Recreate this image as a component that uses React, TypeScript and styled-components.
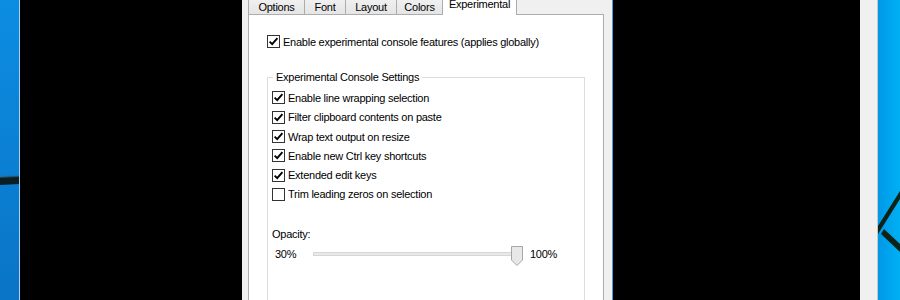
import React from "react";
import styled, { createGlobalStyle } from "styled-components";

const Global = createGlobalStyle`
  html, body { margin: 0; padding: 0; background: #000; }
  body { font-family: "Liberation Sans", Arial, sans-serif; }
  #root { width: 900px; height: 300px; overflow: hidden; }
`;

const Screen = styled.div`
  display: flex;
  width: 900px;
  height: 300px;
  overflow: hidden;
  font-family: "Liberation Sans", Arial, sans-serif;
  font-size: 11px;
  letter-spacing: -0.25px;
  color: #000;
`;

const DesktopStrip = styled.div<{ $w: number; $bg: string; $edge?: string; $edgeSide?: "left" | "right" }>`
  flex: none;
  width: ${(p) => p.$w}px;
  height: 100%;
  box-sizing: border-box;
  background: ${(p) => p.$bg};
  ${(p) => (p.$edge ? `border-${p.$edgeSide}: 1px solid ${p.$edge};` : "")}
  overflow: hidden;
  svg { display: block; }
`;

const ConsoleBack = styled.div<{ $w: number; $edge?: string }>`
  flex: none;
  width: ${(p) => p.$w}px;
  height: 100%;
  box-sizing: border-box;
  background: #000;
  ${(p) => (p.$edge ? `border-left: 1px solid ${p.$edge};` : "")}
`;

const GreyGap = styled.div<{ $w: number }>`
  flex: none;
  width: ${(p) => p.$w}px;
  height: 100%;
  box-sizing: border-box;
  background: #f0f0f0;
  border-right: 1px solid #c8c8c8;
`;

const Dialog = styled.div`
  flex: none;
  width: 370px;
  height: 100%;
  box-sizing: border-box;
  background: #f0f0f0;
  padding: 0 8px 0 6px;
  display: flex;
  flex-direction: column;
`;

const TabStrip = styled.div`
  display: flex;
  align-items: flex-end;
  height: 14px;
  flex: none;
`;

const Tab = styled.div<{ $w: number; $active?: boolean }>`
  flex: none;
  box-sizing: border-box;
  width: ${(p) => p.$w}px;
  margin-left: -1px;
  &:first-child { margin-left: 0; }
  border-left: 1px solid #acacac;
  border-right: 1px solid #acacac;
  text-align: center;
  white-space: nowrap;
  height: ${(p) => (p.$active ? 16 : 14)}px;
  line-height: ${(p) => (p.$active ? 11 : 13)}px;
  background: ${(p) => (p.$active ? "#ffffff" : "linear-gradient(#f0f0f0, #e5e5e5)")};
  position: relative;
  z-index: ${(p) => (p.$active ? 1 : 0)};
  margin-bottom: ${(p) => (p.$active ? -1 : 0)}px;
  padding-top: ${(p) => (p.$active ? 0 : 1)}px;
`;

const Panel = styled.div`
  flex: 1;
  box-sizing: border-box;
  width: 356px;
  background: #fff;
  border: 1px solid #adadad;
  padding: 17px 0 0 18px;
`;

const CheckRow = styled.label`
  display: flex;
  align-items: center;
  gap: 3px;
  height: 19.3px;
  white-space: nowrap;
`;

const Box = styled.span`
  flex: none;
  width: 13px;
  height: 13px;
  box-sizing: border-box;
  border: 1px solid #333333;
  background: #fff;
  display: flex;
  align-items: center;
  justify-content: center;
  svg { display: block; }
`;

const Group = styled.fieldset`
  margin: 19px 0 0 0;
  width: 318px;
  box-sizing: border-box;
  border: 1px solid #dcdcdc;
  border-bottom: none;
  padding: 4px 0 0 4px;
  min-height: 240px;
`;

const Legend = styled.legend`
  padding: 0 3px;
  margin-left: 1px;
  line-height: 14px;
  white-space: nowrap;
`;

const FieldLabel = styled.div`
  margin-top: 23px;
  line-height: 14px;
`;

const SliderRow = styled.div`
  display: flex;
  align-items: center;
  height: 20px;
  margin-top: 3px;
`;

const RangeLabel = styled.span<{ $w?: number; $ml?: number }>`
  flex: none;
  ${(p) => (p.$w ? `width: ${p.$w}px;` : "")}
  margin-left: ${(p) => p.$ml ?? 0}px;
`;

const Slider = styled.div`
  flex: none;
  position: relative;
  width: 210px;
  height: 20px;
`;

const Track = styled.div`
  margin-top: 8px;
  width: 202px;
  height: 4px;
  box-sizing: border-box;
  background: #e7eaea;
  border: 1px solid #d6d6d6;
`;

const Thumb = styled.svg`
  position: absolute;
  right: 0;
  top: 2px;
  display: block;
`;

const Check = ({ checked }: { checked: boolean }) => (
  <Box>
    {checked && (
      <svg width="11" height="11" viewBox="0 0 11 11">
        <path d="M1.6 5.6 L4.2 8.2 L9.4 2.2" fill="none" stroke="#000" strokeWidth="1.9" />
      </svg>
    )}
  </Box>
);

const groupItems: [string, boolean][] = [
  ["Enable line wrapping selection", true],
  ["Filter clipboard contents on paste", true],
  ["Wrap text output on resize", true],
  ["Enable new Ctrl key shortcuts", true],
  ["Extended edit keys", true],
  ["Trim leading zeros on selection", false],
];

const tabs: [string, number][] = [
  ["Options", 57],
  ["Font", 42],
  ["Layout", 52],
  ["Colors", 47],
  ["Experimental", 75],
];

export default function App() {
  return (
    <>
      <Global />
      <Screen>
        <DesktopStrip $w={20} $bg="linear-gradient(#0c8de2, #0a74c6)" $edge="#a6d2f0" $edgeSide="right">
          <svg width="19" height="300" viewBox="0 0 19 300">
            <polygon points="0,177 19,176 19,184 0,185" fill="#0a1e24" />
            <polygon points="0,176 19,175 19,177 0,178" fill="#2a6a8a" opacity="0.6" />
          </svg>
        </DesktopStrip>
        <ConsoleBack $w={222} />
        <Dialog>
          <TabStrip>
            {tabs.map(([t, w]) => (
              <Tab key={t} $w={w} $active={t === "Experimental"}>
                {t}
              </Tab>
            ))}
          </TabStrip>
          <Panel>
            <CheckRow>
              <Check checked />
              Enable experimental console features (applies globally)
            </CheckRow>
            <Group>
              <Legend>Experimental Console Settings</Legend>
              {groupItems.map(([t, c]) => (
                <CheckRow key={t}>
                  <Check checked={c} />
                  {t}
                </CheckRow>
              ))}
              <FieldLabel>Opacity:</FieldLabel>
              <SliderRow>
                <RangeLabel $w={38} $ml={3}>30%</RangeLabel>
                <Slider>
                  <Track />
                  <Thumb width="12" height="20" viewBox="0 0 12 20">
                    <polygon points="0.5,0.5 11.5,0.5 11.5,14 6,19.5 0.5,14" fill="#e8e8e8" stroke="#a6a6a6" />
                  </Thumb>
                </Slider>
                <RangeLabel $ml={7}>100%</RangeLabel>
              </SliderRow>
            </Group>
          </Panel>
        </Dialog>
        <ConsoleBack $w={248} $edge="#4a9ad6" />
        <GreyGap $w={18} />
        <DesktopStrip $w={22} $bg="linear-gradient(90deg, #0098e6, #00b0f5)">
          <svg width="22" height="300" viewBox="0 0 22 300">
            <polygon points="0,226 22,191 22,199 0,234" fill="#0b2418" />
            <polygon points="6,229 22,244 22,252 3,234" fill="#0b2418" />
          </svg>
        </DesktopStrip>
      </Screen>
    </>
  );
}
